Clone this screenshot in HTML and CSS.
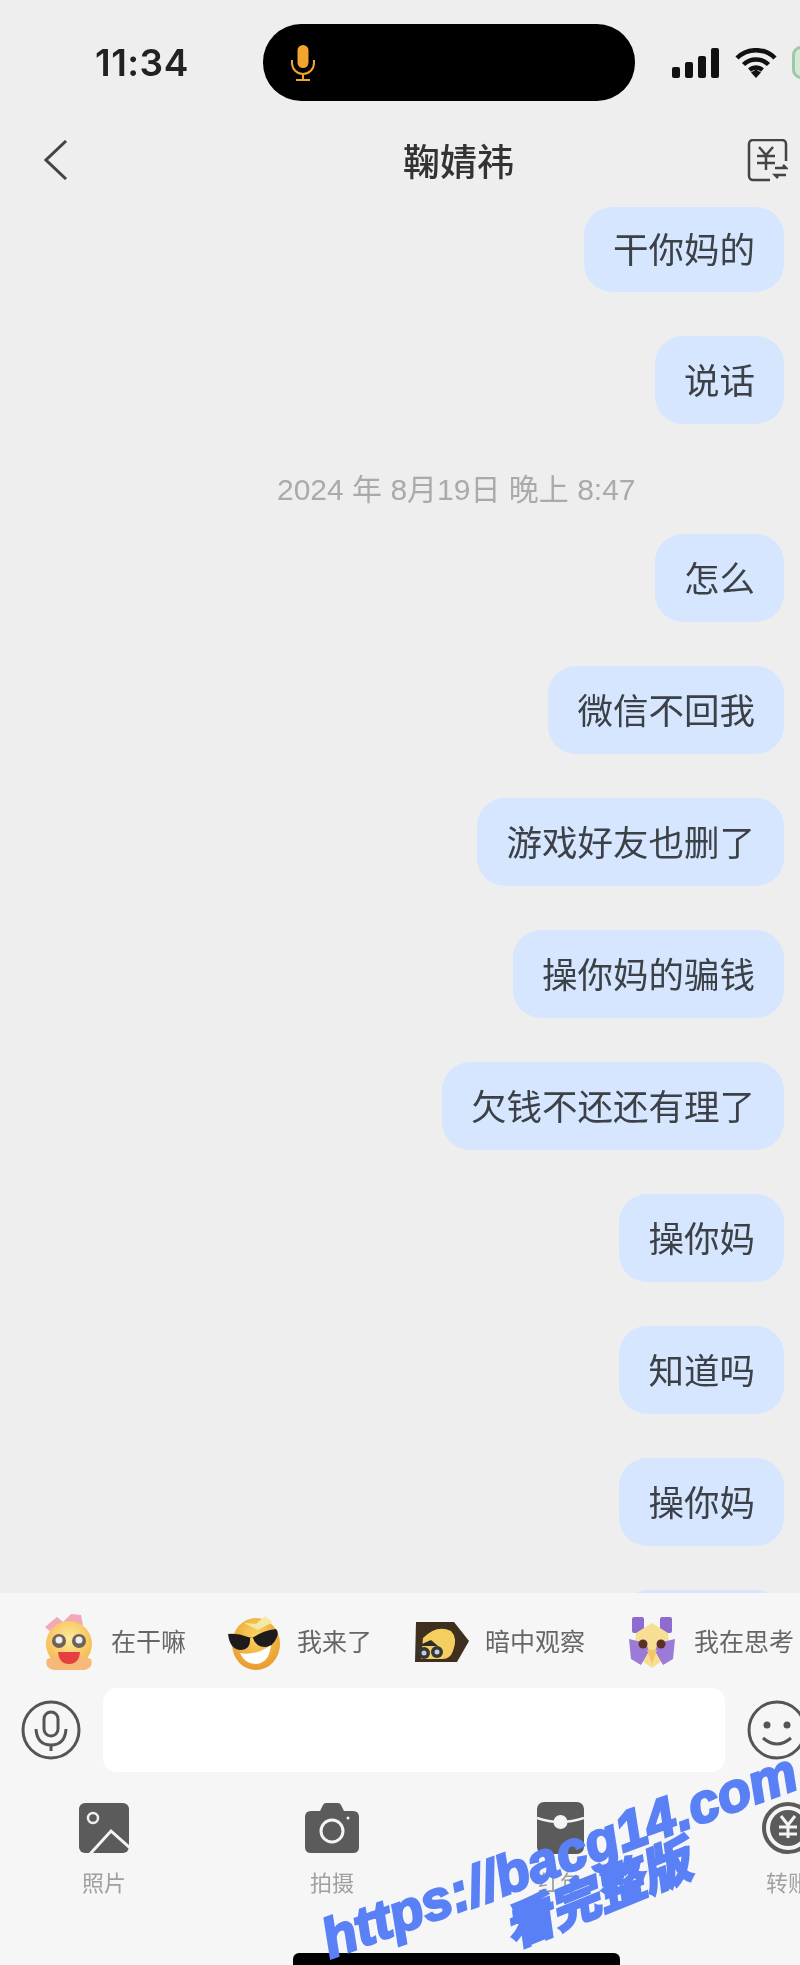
FILE: index.html
```html
<!DOCTYPE html>
<html lang="zh-CN">
<head>
    <meta charset="UTF-8">
    <meta name="viewport" content="width=device-width, initial-scale=1.0">
    <title>鞠婧祎</title>
    <link rel="stylesheet" href="styles.css">
</head>
<body>
    <div class="phone">
        <div class="status">
            <span class="clock">11:34</span>
            <div class="island">
                <svg width="26" height="36" viewBox="0 0 26 36">
                    <rect x="7.5" y="0" width="11" height="23" rx="5.5" fill="#f3a42e"/>
                    <path d="M2 15v3a11 11 0 0 0 22 0v-3M13 29v6M6 35h14" fill="none" stroke="#f3a42e" stroke-width="2"/>
                </svg>
            </div>
            <div class="status-icons">
                <svg width="48" height="30" viewBox="0 0 48 30">
                    <rect x="0" y="19" width="8" height="11" rx="2" fill="#111"/>
                    <rect x="13" y="14" width="8" height="16" rx="2" fill="#111"/>
                    <rect x="26" y="8" width="8" height="22" rx="2" fill="#111"/>
                    <rect x="39" y="0" width="8" height="30" rx="2" fill="#111"/>
                </svg>
                <svg width="42" height="30" viewBox="0 0 42 30">
                    <path d="M2 10a27 27 0 0 1 38 0M8.500 16.500a18 18 0 0 1 25 0M14.500 22a10 10 0 0 1 13 0" fill="none" stroke="#111" stroke-width="4.500"/>
                    <path d="M16 24.500l5-3 5 3-5 5.500z" fill="#111"/>
                </svg>
                <div class="battery"></div>
            </div>
        </div>

        <div class="nav">
            <svg width="24" height="40" viewBox="0 0 24 40">
                <path d="M22 1L2 20l20 19" fill="none" stroke="#444" stroke-width="3"/>
            </svg>
            <h1 class="title">鞠婧祎</h1>
            <svg class="nav-pay" width="41" height="43" viewBox="0 0 41 43">
                <path d="M23 41H6a4 4 0 0 1-4-4V5a4 4 0 0 1 4-4h29a4 4 0 0 1 4 4v17" fill="none" stroke="#444" stroke-width="2.500"/>
                <path d="M12 8l7 8 7-8M10 17h18M10 24h18M19 16v15" fill="none" stroke="#444" stroke-width="2.500"/>
                <path d="M28 29h11l-3-3M39 36H28l3 3" fill="none" stroke="#444" stroke-width="2.500"/>
            </svg>
        </div>

        <div class="chat">
            <div class="bubble bubble-short">干你妈的</div>
            <div class="bubble">说话</div>
            <div class="date">2024 年 8月19日 晚上 8:47</div>
            <div class="bubble">怎么</div>
            <div class="bubble">微信不回我</div>
            <div class="bubble">游戏好友也删了</div>
            <div class="bubble">操你妈的骗钱</div>
            <div class="bubble">欠钱不还还有理了</div>
            <div class="bubble">操你妈</div>
            <div class="bubble">知道吗</div>
            <div class="bubble">操你妈</div>
            <div class="bubble bubble-cut"></div>
        </div>

        <div class="panel">
            <div class="stickers">
                <div class="sticker">
                    <svg width="52" height="58" viewBox="0 0 52 58">
                        <defs>
                            <radialGradient id="face" cx="50%" cy="38%" r="62%">
                                <stop offset="0" stop-color="#fdeb9a"/>
                                <stop offset="1" stop-color="#f6b84c"/>
                            </radialGradient>
                        </defs>
                        <path d="M2 14L14 4l6 5 8-8 10 1 2 10-16 5-14 4z" fill="#f2a8b6"/>
                        <circle cx="26" cy="31" r="23" fill="url(#face)"/>
                        <path d="M4 46q-3 9 7 11h30q10-2 7-11l-10-3H14z" fill="#f8b878"/>
                        <circle cx="16" cy="28" r="7" fill="#6f6258"/>
                        <circle cx="36" cy="28" r="7" fill="#6f6258"/>
                        <circle cx="16" cy="27" r="3.500" fill="#eee"/>
                        <circle cx="36" cy="27" r="3.500" fill="#eee"/>
                        <path d="M15 39h22q-1 12-11 12T15 39z" fill="#e63f3f"/>
                    </svg>
                    <span>在干嘛</span>
                </div>
                <div class="sticker">
                    <svg width="54" height="56" viewBox="0 0 54 56">
                        <defs>
                            <radialGradient id="sun" cx="50%" cy="35%" r="65%">
                                <stop offset="0" stop-color="#fbd664"/>
                                <stop offset="1" stop-color="#e99a2c"/>
                            </radialGradient>
                        </defs>
                        <ellipse cx="29" cy="30" rx="24" ry="26" fill="url(#sun)"/>
                        <path d="M17 9l12 1 9-8 8 6-15 8z" fill="#f5e9a8"/>
                        <path d="M1 20q10-1 20 3l4 1q12-8 24-9 3 3 1 8-4 10-12 10-9 0-12-9l-3 0q1 12-9 12Q3 36 1 20z" fill="#1d1b1c"/>
                        <path d="M13 39q16 3 31-8-2 19-16 19-10 0-15-11z" fill="#fff"/>
                    </svg>
                    <span>我来了</span>
                </div>
                <div class="sticker">
                    <svg width="56" height="40" viewBox="0 0 56 40">
                        <path d="M3 0h38l15 19-12 21H2z" fill="#3f2f1f"/>
                        <path d="M10 16q14-14 28-7 7 7 2 20-3 8-10 8H8z" fill="#f4ce5e"/>
                        <circle cx="11" cy="31" r="6" fill="#33373d"/>
                        <circle cx="24" cy="30" r="6" fill="#33373d"/>
                        <circle cx="11" cy="31" r="2.500" fill="#ccc"/>
                        <circle cx="24" cy="30" r="2.500" fill="#ccc"/>
                        <path d="M9 22l9-4 7 6H9z" fill="#2d2b2b"/>
                    </svg>
                    <span>暗中观察</span>
                </div>
                <div class="sticker">
                    <svg width="52" height="54" viewBox="0 0 52 54">
                        <rect x="6" y="2" width="12" height="16" rx="2" fill="#8e6bd0"/>
                        <rect x="34" y="2" width="12" height="16" rx="2" fill="#8e6bd0"/>
                        <path d="M10 18l16-10 16 10 2 22-18 13L8 40z" fill="#f6df93"/>
                        <path d="M3 24l17 4 3 8-8 14-10-6zM49 24l-17 4-3 8 8 14 10-6z" fill="#9c7ad8"/>
                        <circle cx="17" cy="29" r="4.500" fill="#5a3028"/>
                        <circle cx="35" cy="29" r="4.500" fill="#5a3028"/>
                        <path d="M21 35h10l-5 14z" fill="#f3c763"/>
                    </svg>
                    <span>我在思考</span>
                </div>
            </div>

            <div class="input-row">
                <svg class="round-icon" width="60" height="60" viewBox="0 0 60 60">
                    <circle cx="30" cy="30" r="28" fill="none" stroke="#555" stroke-width="3"/>
                    <rect x="23" y="12" width="14" height="24" rx="7" fill="none" stroke="#555" stroke-width="3"/>
                    <path d="M15 29q1 16 15 16t15-16M30 45v6" fill="none" stroke="#555" stroke-width="3"/>
                </svg>
                <div class="input"></div>
                <svg class="round-icon" width="60" height="60" viewBox="0 0 60 60">
                    <circle cx="30" cy="30" r="28" fill="none" stroke="#555" stroke-width="3"/>
                    <circle cx="20" cy="25" r="3.500" fill="#555"/>
                    <circle cx="40" cy="25" r="3.500" fill="#555"/>
                    <path d="M16 38q14 12 28 0" fill="none" stroke="#555" stroke-width="3"/>
                </svg>
            </div>

            <div class="tools">
                <div class="tool">
                    <svg width="50" height="52" viewBox="0 0 50 52">
                        <rect width="50" height="50" y="1" rx="6" fill="#5b5b5b"/>
                        <circle cx="14" cy="16" r="5" fill="none" stroke="#f0f0f0" stroke-width="2.500"/>
                        <path d="M11 52l21-23 19 17" fill="none" stroke="#f4f4f4" stroke-width="3"/>
                    </svg>
                    <span>照片</span>
                </div>
                <div class="tool">
                    <svg width="54" height="52" viewBox="0 0 54 52">
                        <path d="M6 9h9l3-6q1-2 3-2h12q2 0 3 2l3 6h9q6 0 6 6v30q0 6-6 6H6q-6 0-6-6V15q0-6 6-6z" fill="#5b5b5b"/>
                        <circle cx="27" cy="29" r="11" fill="none" stroke="#f4f4f4" stroke-width="3"/>
                        <circle cx="43" cy="16" r="1.500" fill="#f4f4f4"/>
                    </svg>
                    <span>拍摄</span>
                </div>
                <div class="tool">
                    <svg width="47" height="52" viewBox="0 0 47 52">
                        <rect width="47" height="52" rx="7" fill="#5b5b5b"/>
                        <path d="M0 16q23 8 47 0" fill="none" stroke="#f4f4f4" stroke-width="2.500"/>
                        <circle cx="23.500" cy="20" r="7" fill="#f4f4f4"/>
                    </svg>
                    <span>红包</span>
                </div>
                <div class="tool">
                    <svg width="56" height="52" viewBox="0 0 56 52">
                        <circle cx="28" cy="26" r="24" fill="none" stroke="#5b5b5b" stroke-width="4"/>
                        <circle cx="28" cy="26" r="18" fill="#5b5b5b"/>
                        <path d="M21 14l7 9 7-9M19 25h18M19 32h18M28 23v13" fill="none" stroke="#f4f4f4" stroke-width="3"/>
                    </svg>
                    <span>转账</span>
                </div>
            </div>
        </div>

        <div class="home-bar"></div>
        <div class="mark mark-url">https://bacg14.com</div>
        <div class="mark mark-cn">看完整版</div>
    </div>
</body>
</html>
```

FILE: styles.css
```css
* {
    box-sizing: border-box;
}
html, body {
    margin: 0;
    overflow: hidden;
}
.phone {
    position: relative;
    width: 800px;
    height: 1965px;
    display: flex;
    flex-direction: column;
    overflow: hidden;
    background-color: #eeeeee;
    color: #3c4047;
    font-family: "Noto Sans CJK SC", "Liberation Sans", sans-serif;
    filter: blur(0.7px);
}

/* status bar */
.status {
    flex: none;
    height: 125px;
    padding: 24px 0 24px 95px;
    display: flex;
    align-items: center;
}
.clock {
    flex: none;
    width: 168px;
    font-family: Inter, "Liberation Sans", sans-serif;
    font-size: 37px;
    font-weight: 600;
    letter-spacing: 0.5px;
    color: #222;
}
.island {
    flex: none;
    width: 372px;
    height: 77px;
    padding-left: 27px;
    display: flex;
    align-items: center;
    background-color: #000;
    border-radius: 38px;
}
.status-icons {
    flex: none;
    margin-left: 37px;
    display: flex;
    align-items: center;
    gap: 15px;
}
.battery {
    flex: none;
    width: 30px;
    height: 33px;
    border: 3px solid #9fc9a4;
    border-radius: 9px;
    background-color: #d5e8d6;
}

/* nav */
.nav {
    flex: none;
    height: 70px;
    padding-left: 44px;
    display: flex;
    align-items: center;
}
.title {
    margin: 0 0 0 335px;
    font-size: 37px;
    font-weight: 500;
    line-height: 1;
    color: #333;
}
.nav-pay {
    margin-left: auto;
    margin-right: 12px;
}

/* messages */
.chat {
    flex: 1;
    min-height: 0;
    padding: 12px 16px 0 0;
    display: flex;
    flex-direction: column;
    align-items: flex-end;
    overflow: hidden;
}
.bubble {
    flex: none;
    height: 88px;
    margin-bottom: 44px;
    padding: 0 29px 4px;
    display: flex;
    align-items: center;
    background-color: #d6e6fe;
    border-radius: 28px;
    font-size: 35.500px;
}
.bubble-short {
    height: 85px;
}
.bubble-cut {
    width: 163px;
}
.date {
    flex: none;
    align-self: flex-start;
    height: 42px;
    margin: 0 0 24px 277px;
    font-family: "Liberation Sans", "Noto Sans CJK SC", sans-serif;
    font-size: 30px;
    line-height: 44px;
    color: #aaaaaa;
    white-space: nowrap;
}

/* bottom panel */
.panel {
    flex: none;
    height: 372px;
    background-color: #f6f6f6;
    overflow: hidden;
}
.stickers {
    height: 95px;
    padding: 20px 0 0 43px;
    display: flex;
    gap: 41px;
}
.sticker {
    flex: none;
    height: 58px;
    display: flex;
    align-items: center;
    gap: 16px;
    font-size: 25px;
    color: #666;
}
.sticker span {
    padding-bottom: 4px;
}
.input-row {
    height: 84px;
    padding-left: 21px;
    display: flex;
    align-items: center;
    gap: 22px;
}
.round-icon {
    flex: none;
}
.input {
    flex: none;
    width: 622px;
    height: 84px;
    background-color: #fff;
    border-radius: 14px;
}
.tools {
    margin: 30px 0 0 -10px;
    display: flex;
}
.tool {
    flex: none;
    width: 228px;
    display: flex;
    flex-direction: column;
    align-items: center;
    gap: 12px;
    font-size: 22px;
    line-height: 30px;
    color: #a0a0a0;
}
.tool svg {
    display: block;
}

.home-bar {
    position: absolute;
    left: 293px;
    bottom: 0;
    width: 327px;
    height: 12px;
    background-color: #000;
    border-radius: 6px 6px 0 0;
}

/* watermark */
.mark {
    position: absolute;
    color: #5a80f6;
    font-weight: 700;
    font-style: italic;
    white-space: nowrap;
    transform-origin: left bottom;
}
.mark-url {
    left: 335px;
    top: 1906px;
    font-family: "Liberation Sans", sans-serif;
    font-size: 55px;
    line-height: 66px;
    -webkit-text-stroke: 2.5px #5a80f6;
    transform: rotate(-20deg);
}
.mark-cn {
    left: 516px;
    top: 1896px;
    font-size: 49px;
    line-height: 60px;
    -webkit-text-stroke: 3px #5a80f6;
    transform: rotate(-22deg);
}
```
